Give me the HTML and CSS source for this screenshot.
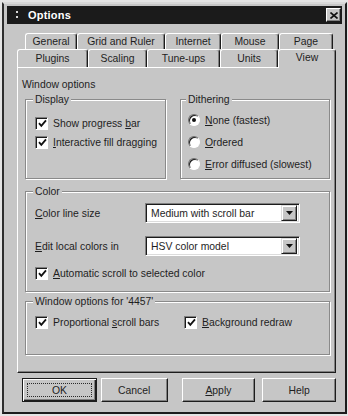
FILE: index.html
```html
<!DOCTYPE html>
<html>
<head>
<meta charset="utf-8">
<title>Options</title>
<link rel="stylesheet" href="styles.css">
</head>
<body>
<div class="window">
  <div class="titlebar">
    <svg class="ticon" width="5" height="10" viewBox="0 0 5 10"><rect x="1" y="1" width="2" height="2" fill="#d8d8d8"/><rect x="1" y="6" width="2" height="2" fill="#d8d8d8"/></svg>
    <span class="title">Options</span>
    <span class="close"><svg width="8" height="7" viewBox="0 0 8 7"><path d="M0.5 0.5 L7.5 6.5 M7.5 0.5 L0.5 6.5" stroke="#111" stroke-width="1.6" fill="none"/></svg></span>
  </div>
  <div class="content">
    <div class="tabs row1">
      <div class="tab t-general">General</div>
      <div class="tab t-grid">Grid and Ruler</div>
      <div class="tab t-internet">Internet</div>
      <div class="tab t-mouse">Mouse</div>
      <div class="tab t-page">Page</div>
    </div>
    <div class="tabs row2">
      <div class="tab t-plugins">Plugins</div>
      <div class="tab t-scaling">Scaling</div>
      <div class="tab t-tuneups">Tune-ups</div>
      <div class="tab t-units">Units</div>
      <div class="tab t-view sel">View</div>
    </div>
    <div class="panel">
      <div class="caption">Window options</div>
      <div class="groups">
        <div class="top-row">
          <div class="group g-display">
            <div class="legend">Display</div>
            <div class="rows rows-display">
              <div class="check"><span class="box"><svg width="9" height="9" viewBox="0 0 9 9"><path d="M1 4.2 L3.3 6.8 L8 1.3" stroke="#111" stroke-width="1.8" fill="none"/></svg></span><span>Show progress <u>b</u>ar</span></div>
              <div class="check"><span class="box"><svg width="9" height="9" viewBox="0 0 9 9"><path d="M1 4.2 L3.3 6.8 L8 1.3" stroke="#111" stroke-width="1.8" fill="none"/></svg></span><span><u>I</u>nteractive fill dragging</span></div>
            </div>
          </div>
          <div class="group g-dither">
            <div class="legend">Dithering</div>
            <div class="rows rows-dither">
              <div class="radio-row"><span class="radio on"><span class="dot"></span></span><span><u>N</u>one (fastest)</span></div>
              <div class="radio-row"><span class="radio"></span><span><u>O</u>rdered</span></div>
              <div class="radio-row"><span class="radio"></span><span><u>E</u>rror diffused (slowest)</span></div>
            </div>
          </div>
        </div>
        <div class="group g-color">
          <div class="legend">Color</div>
          <div class="field f1">
            <span class="field-label"><u>C</u>olor line size</span>
            <span class="select"><span class="sel-text">Medium with scroll bar</span><span class="arrow"><svg width="7" height="4" viewBox="0 0 7 4"><polygon points="0,0 7,0 3.5,4" fill="#111"/></svg></span></span>
          </div>
          <div class="field f2">
            <span class="field-label"><u>E</u>dit local colors in</span>
            <span class="select"><span class="sel-text">HSV color model</span><span class="arrow"><svg width="7" height="4" viewBox="0 0 7 4"><polygon points="0,0 7,0 3.5,4" fill="#111"/></svg></span></span>
          </div>
          <div class="check c-auto"><span class="box"><svg width="9" height="9" viewBox="0 0 9 9"><path d="M1 4.2 L3.3 6.8 L8 1.3" stroke="#111" stroke-width="1.8" fill="none"/></svg></span><span><u>A</u>utomatic scroll to selected color</span></div>
        </div>
        <div class="group g-win">
          <div class="legend">Window options for '4457'</div>
          <div class="win-row">
            <div class="check c-prop"><span class="box"><svg width="9" height="9" viewBox="0 0 9 9"><path d="M1 4.2 L3.3 6.8 L8 1.3" stroke="#111" stroke-width="1.8" fill="none"/></svg></span><span>Proportional <u>s</u>croll bars</span></div>
            <div class="check"><span class="box"><svg width="9" height="9" viewBox="0 0 9 9"><path d="M1 4.2 L3.3 6.8 L8 1.3" stroke="#111" stroke-width="1.8" fill="none"/></svg></span><span><u>B</u>ackground redraw</span></div>
          </div>
        </div>
      </div>
    </div>
    <div class="buttons">
      <div class="btn ok"><span class="focus">OK</span></div>
      <div class="btn cancel">Cancel</div>
      <div class="btn apply"><u>A</u>pply</div>
      <div class="btn help">Help</div>
    </div>
  </div>
</div>
</body>
</html>
```
FILE: styles.css
```css
* { box-sizing: border-box; }
html, body { margin: 0; padding: 0; }
body {
  width: 348px;
  height: 416px;
  background: #e4e4e4;
  font-family: "Liberation Sans", Arial, sans-serif;
  font-size: 10.4px;
  color: #1e1e1e;
  overflow: hidden;
}
u { text-decoration-thickness: 1px; text-underline-offset: 1px; }

.window {
  margin: 2px 0 0 2px;
  width: 345px;
  height: 412px;
  background: #c6c6c6;
  border: 2px solid;
  border-color: #d8d8d8 #1c1c1c #1c1c1c #2e2e2e;
  padding: 2px 3px 0 3px;
}

.titlebar {
  height: 18px;
  background: #1b1b1b;
  display: flex;
  align-items: center;
  padding: 0 1px 0 8px;
  color: #fff;
}
.ticon { margin-right: 8px; }
.title { flex: 1; font-weight: bold; font-size: 11px; letter-spacing: 0.2px; }
.close {
  width: 15px;
  height: 14px;
  background: #c6c6c6;
  border: 1px solid;
  border-color: #fff #1c1c1c #1c1c1c #fff;
  box-shadow: inset -1px -1px 0 #808080;
  display: flex;
  align-items: center;
  justify-content: center;
}

.content { padding: 9px 6px 0 10px; }

.tabs { display: flex; }
.row1 { height: 16px; padding-left: 8px; }
.row2 { height: 18px; }
.tab {
  border: 1px solid;
  border-bottom: none;
  border-color: #fff #1c1c1c transparent #fff;
  border-radius: 3px 3px 0 0;
  box-shadow: inset -1px 0 0 #808080;
  display: flex;
  align-items: center;
  justify-content: center;
  white-space: nowrap;
}
.t-general { width: 52px; }
.t-grid { width: 88px; }
.t-internet { width: 56px; }
.t-mouse { width: 58px; }
.t-page { width: 54px; }
.t-plugins { width: 71px; }
.t-scaling { width: 59px; }
.t-tuneups { width: 73px; }
.t-units { width: 58px; }
.t-view { width: 58px; }
.tab.sel {
  height: 19px;
  margin-bottom: -1px;
  background: #c6c6c6;
  z-index: 1;
  padding-bottom: 3px;
}

.panel {
  height: 306px;
  border: 1px solid;
  border-color: #fff #1c1c1c #1c1c1c #fff;
  box-shadow: inset -1px -1px 0 #808080;
  padding: 10px 5px 0 4px;
}
.caption { height: 13px; line-height: 13px; }
.groups { padding-left: 3px; }

.top-row { display: flex; margin-top: 8px; }
.group {
  border: 1px solid #8a8a8a;
  box-shadow: 1px 1px 0 #fff, inset 1px 1px 0 #fff;
  padding: 0 9px;
}
.legend {
  width: fit-content;
  height: 13px;
  line-height: 13px;
  margin: -7px 0 0 -2px;
  padding: 0 2px;
  background: #c6c6c6;
}
.g-display { width: 141px; height: 80px; }
.g-dither { width: 150px; height: 80px; margin-left: 14px; padding-left: 7px; }
.g-color { height: 101px; margin-top: 12px; }
.g-win { height: 54px; margin-top: 9px; }

.rows { display: flex; flex-direction: column; }
.rows-display { margin-top: 9px; gap: 3px; }
.rows-dither { margin-top: 6px; gap: 6px; }

.check, .radio-row {
  display: flex;
  align-items: center;
  height: 16px;
  white-space: nowrap;
}
.box {
  width: 13px;
  height: 13px;
  flex: none;
  background: #fff;
  border: 1px solid;
  border-color: #808080 #fff #fff #808080;
  box-shadow: inset 1px 1px 0 #1c1c1c;
  margin-right: 5px;
  display: flex;
  align-items: center;
  justify-content: center;
  padding: 1px 0 0 1px;
}
.radio {
  width: 12px;
  height: 12px;
  flex: none;
  border-radius: 50%;
  background: #fff;
  border: 1px solid;
  border-color: #6e6e6e #fff #fff #6e6e6e;
  box-shadow: inset 1px 1px 0 #1c1c1c;
  margin-right: 5px;
  display: flex;
  align-items: center;
  justify-content: center;
}
.dot { width: 4px; height: 4px; border-radius: 50%; background: #111; }

.field { display: flex; align-items: center; height: 20px; }
.f1 { margin-top: 5px; }
.f2 { margin-top: 13px; }
.field-label { width: 110px; white-space: nowrap; }
.select {
  width: 155px;
  height: 20px;
  background: #fff;
  border: 1px solid;
  border-color: #808080 #fff #fff #808080;
  box-shadow: inset 1px 1px 0 #1c1c1c, inset -1px -1px 0 #dcdcdc;
  display: flex;
  align-items: center;
  padding: 2px 2px 2px 5px;
}
.sel-text { flex: 1; white-space: nowrap; }
.arrow {
  width: 16px;
  height: 16px;
  background: #c6c6c6;
  border: 1px solid;
  border-color: #dcdcdc #1c1c1c #1c1c1c #dcdcdc;
  box-shadow: inset 1px 1px 0 #fff, inset -1px -1px 0 #808080;
  display: flex;
  align-items: center;
  justify-content: center;
}
.c-auto { margin-top: 9px; }

.win-row { display: flex; margin-top: 6px; }
.c-prop { width: 149px; }

.buttons { display: flex; margin-top: 5px; padding-left: 5px; height: 24px; }
.btn {
  height: 24px;
  border: 1px solid;
  border-color: #fff #1c1c1c #1c1c1c #fff;
  box-shadow: inset -1px -1px 0 #808080;
  display: flex;
  align-items: center;
  justify-content: center;
  white-space: nowrap;
}
.ok {
  width: 75px;
  border-color: #1c1c1c;
  box-shadow: inset 1px 1px 0 #fff, inset -1px -1px 0 #1c1c1c, inset -2px -2px 0 #808080;
  padding: 4px;
}
.focus {
  flex: 1;
  align-self: stretch;
  border: 1px dotted #2a2a2a;
  display: flex;
  align-items: center;
  justify-content: center;
}
.cancel { width: 67px; margin-left: 4px; }
.apply { width: 74px; margin-left: 14px; }
.help { width: 74px; margin-left: 7px; }
```
